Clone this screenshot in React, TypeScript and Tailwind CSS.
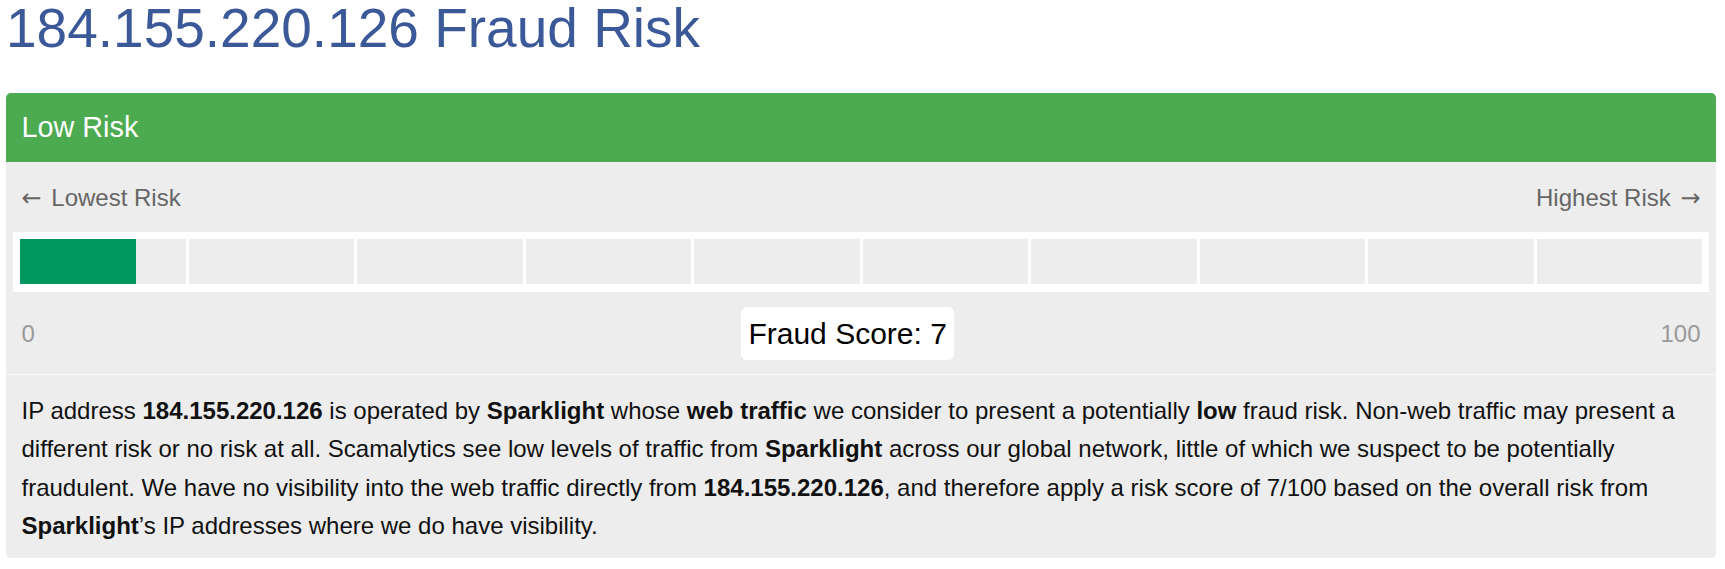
const FONT = "font-['Liberation_Sans',Arial,sans-serif]";
const ARROW = "font-['DejaVu_Sans',sans-serif]";

const score = 7;

function RiskBar({ value }: { value: number }) {
  const cells = Array.from({ length: 10 }, (_, i) => i);
  return (
    <div className="mx-[7px] mt-5 flex gap-[3px] bg-white px-[7px] pt-[7px] pb-[8px]">
      {cells.map((i) => {
        const fill = Math.max(0, Math.min(10, value - i * 10)) * 10;
        return (
          <div key={i} className="relative h-[45px] flex-1 bg-[#ededed]">
            {fill > 0 && (
              <div className="h-full bg-[#00985f]" style={{ width: `${fill}%` }} />
            )}
          </div>
        );
      })}
    </div>
  );
}

export default function App() {
  return (
    <div className={`${FONT} min-h-[569px] bg-white pl-[6px] pr-[9px]`}>
      <h1 className="pt-[1px] text-[55px] leading-none font-normal text-[#3b5998]">
        184.155.220.126 Fraud Risk
      </h1>

      <div className="mt-[37px] overflow-hidden rounded-[5px] bg-[#ededed]">
        <div className="flex h-[69px] items-center bg-[#4caa50] px-[15.5px] text-[28.8px] text-white">
          Low Risk
        </div>

        <div className="pt-[22px] pb-[14px]">
          <div className="flex h-[28px] items-center justify-between px-[15.5px] text-[24px] leading-[28px] text-[#666]">
            <span>
              <span className={`${ARROW} mr-[3px]`}>←</span> Lowest Risk
            </span>
            <span>
              Highest Risk <span className={`${ARROW} ml-[3px]`}>→</span>
            </span>
          </div>

          <RiskBar value={score} />

          <div className="mt-[15px] flex h-[53px] items-center justify-between px-[15.5px]">
            <span className="text-[24px] text-[#999]">0</span>
            <span className="flex h-[53px] items-center rounded-[6px] bg-white px-[7px] text-[30px] text-black">
              Fraud Score: {score}
            </span>
            <span className="text-[24px] text-[#999]">100</span>
          </div>
        </div>

        <p className="border-t border-[#fafafa] px-[15.5px] pt-[17px] pb-[13px] text-[24px] leading-[38.3px] text-[#111]">
          IP address <b>184.155.220.126</b> is operated by <b>Sparklight</b> whose{" "}
          <b>web traffic</b> we consider to present a potentially <b>low</b> fraud risk.
          Non-web traffic may present a different risk or no risk at all. Scamalytics see low
          levels of traffic from <b>Sparklight</b> across our global network, little of which we
          suspect to be potentially fraudulent. We have no visibility into the web traffic
          directly from <b>184.155.220.126</b>, and therefore apply a risk score of 7/100 based
          on the overall risk from <b>Sparklight</b>’s IP addresses where we do have visibility.
        </p>
      </div>
    </div>
  );
}
